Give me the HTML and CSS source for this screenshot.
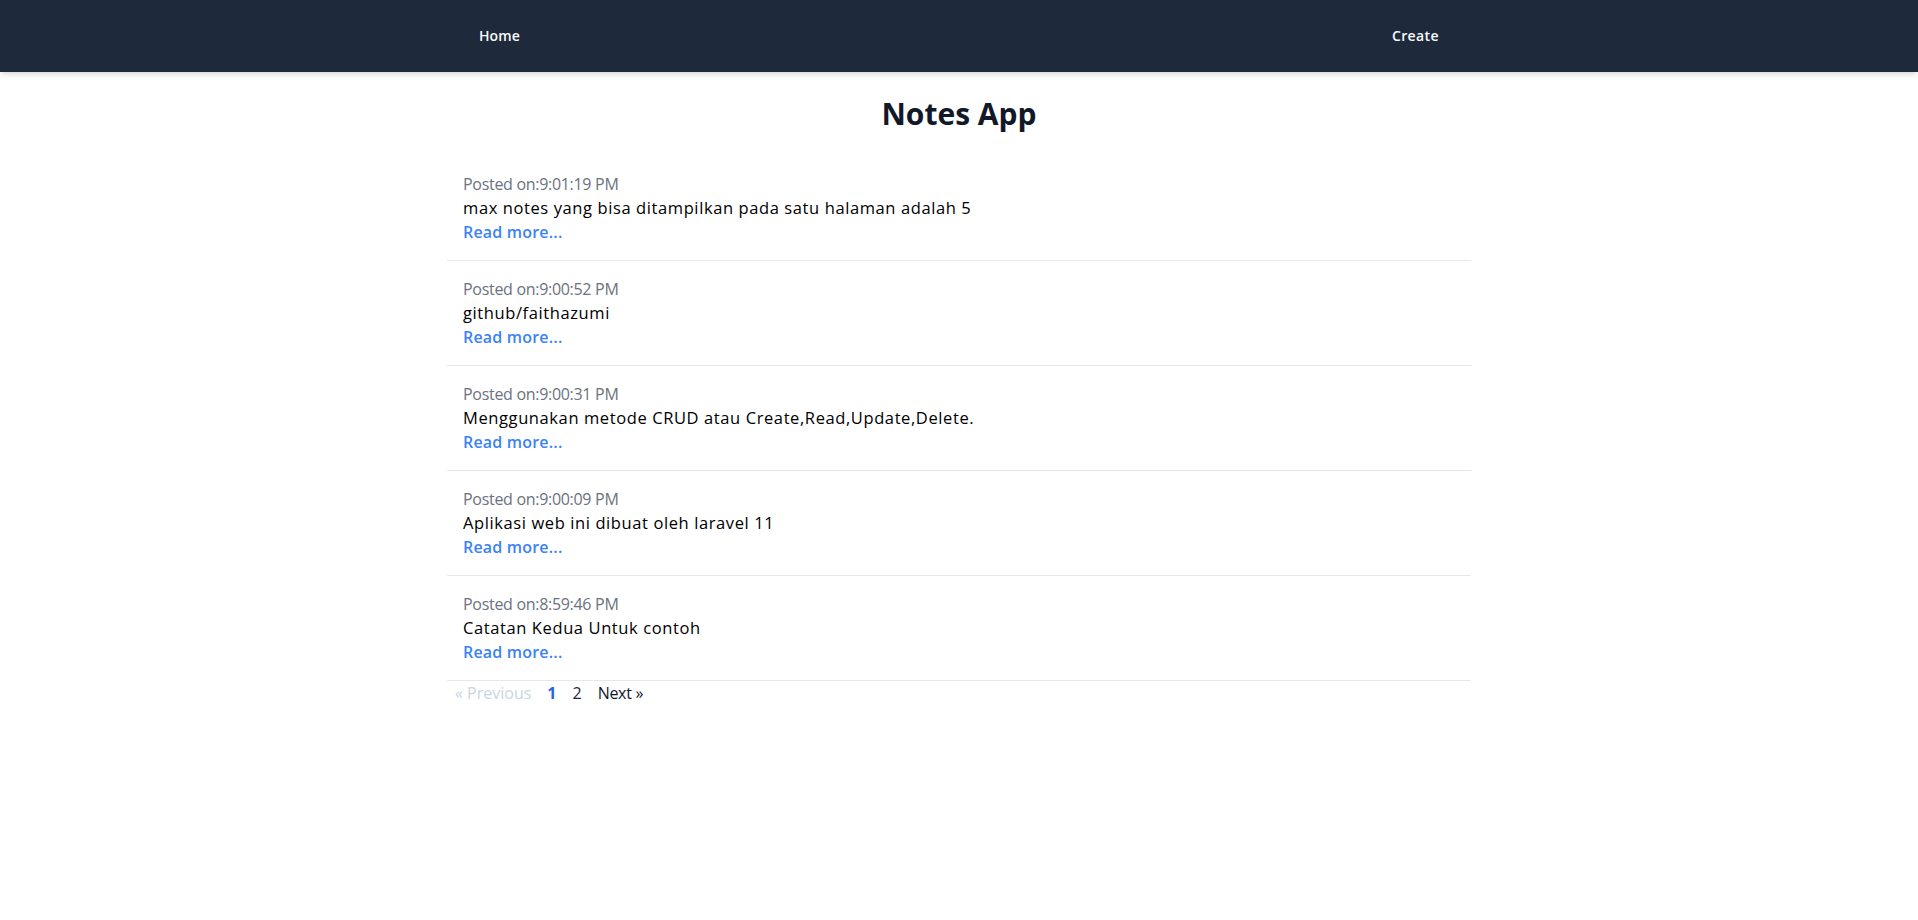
FILE: index.html
```html
<!DOCTYPE html>
<html lang="id">
<head>
<meta charset="utf-8">
<title>Notes App</title>
<link rel="stylesheet" href="styles.css">
</head>
<body>
<nav class="navbar">
  <div class="nav-inner">
    <a class="nav-link nav-home" href="#">Home</a>
    <a class="nav-link nav-create" href="#">Create</a>
  </div>
</nav>
<main class="container">
  <h1 class="title">Notes App</h1>
  <ul class="notes">
    <li class="note">
      <p class="note-time">Posted on:9:01:19 PM</p>
      <p class="note-body">max notes yang bisa ditampilkan pada satu halaman adalah 5</p>
      <a class="note-link" href="#">Read more...</a>
    </li>
    <li class="note">
      <p class="note-time">Posted on:9:00:52 PM</p>
      <p class="note-body">github/faithazumi</p>
      <a class="note-link" href="#">Read more...</a>
    </li>
    <li class="note">
      <p class="note-time">Posted on:9:00:31 PM</p>
      <p class="note-body">Menggunakan metode CRUD atau Create,Read,Update,Delete.</p>
      <a class="note-link" href="#">Read more...</a>
    </li>
    <li class="note">
      <p class="note-time">Posted on:9:00:09 PM</p>
      <p class="note-body">Aplikasi web ini dibuat oleh laravel 11</p>
      <a class="note-link" href="#">Read more...</a>
    </li>
    <li class="note">
      <p class="note-time">Posted on:8:59:46 PM</p>
      <p class="note-body">Catatan Kedua Untuk contoh</p>
      <a class="note-link" href="#">Read more...</a>
    </li>
  </ul>
  <nav class="pagination">
    <span class="page-item page-disabled">&laquo; Previous</span>
    <span class="page-item page-current">1</span>
    <a class="page-item page-num" href="#">2</a>
    <a class="page-item page-next" href="#">Next &raquo;</a>
  </nav>
</main>
</body>
</html>
```
FILE: styles.css
```css
* { box-sizing: border-box; }
html, body { margin: 0; padding: 0; }
body {
  font-family: "Open Sans", "Noto Sans", sans-serif;
  background: #ffffff;
  color: #000000;
  font-size: 16px;
  line-height: 24px;
}
a { text-decoration: none; }
p { margin: 0; }

.navbar {
  background: #1e293b;
  height: 72px;
  box-shadow: 0 4px 6px -1px rgba(0,0,0,0.1), 0 2px 4px -2px rgba(0,0,0,0.1);
}
.nav-inner {
  max-width: 1024px;
  margin: 0 auto;
  padding: 0 16px;
  height: 72px;
  display: flex;
  align-items: center;
  justify-content: space-between;
}
.nav-link {
  color: #f8fafc;
  font-size: 14px;
  font-weight: 600;
  line-height: 20px;
  padding: 0 16px;
  letter-spacing: 0.1px;
}
.nav-create {
  letter-spacing: 0.4px;
}

.container {
  max-width: 1024px;
  margin: 0 auto;
}
.title {
  margin: 24px 0 24px;
  text-align: center;
  font-size: 30px;
  line-height: 36px;
  font-weight: 700;
  color: #111827;
}
.notes {
  list-style: none;
  margin: 0;
  padding: 0;
}
.note {
  padding: 16px;
  border-bottom: 1px solid #e5e7eb;
  display: flex;
  flex-direction: column;
  align-items: flex-start;
}
.note-time {
  color: #6b7280;
  letter-spacing: -0.3px;
}
.note-body {
  color: #000000;
  font-size: 16.5px;
  letter-spacing: 0.6px;
}
.note-link {
  color: #3b82f6;
  font-weight: 600;
  letter-spacing: 0.2px;
}

.pagination {
  display: flex;
  align-items: center;
  line-height: 24px;
}
.page-item {
  padding: 0 8px;
}
.page-disabled { color: #cbd5e1; }
.page-current { color: #2563eb; font-weight: 700; }
.page-num { color: #1f2937; }
.page-next { color: #0f172a; letter-spacing: -0.3px; }
```
